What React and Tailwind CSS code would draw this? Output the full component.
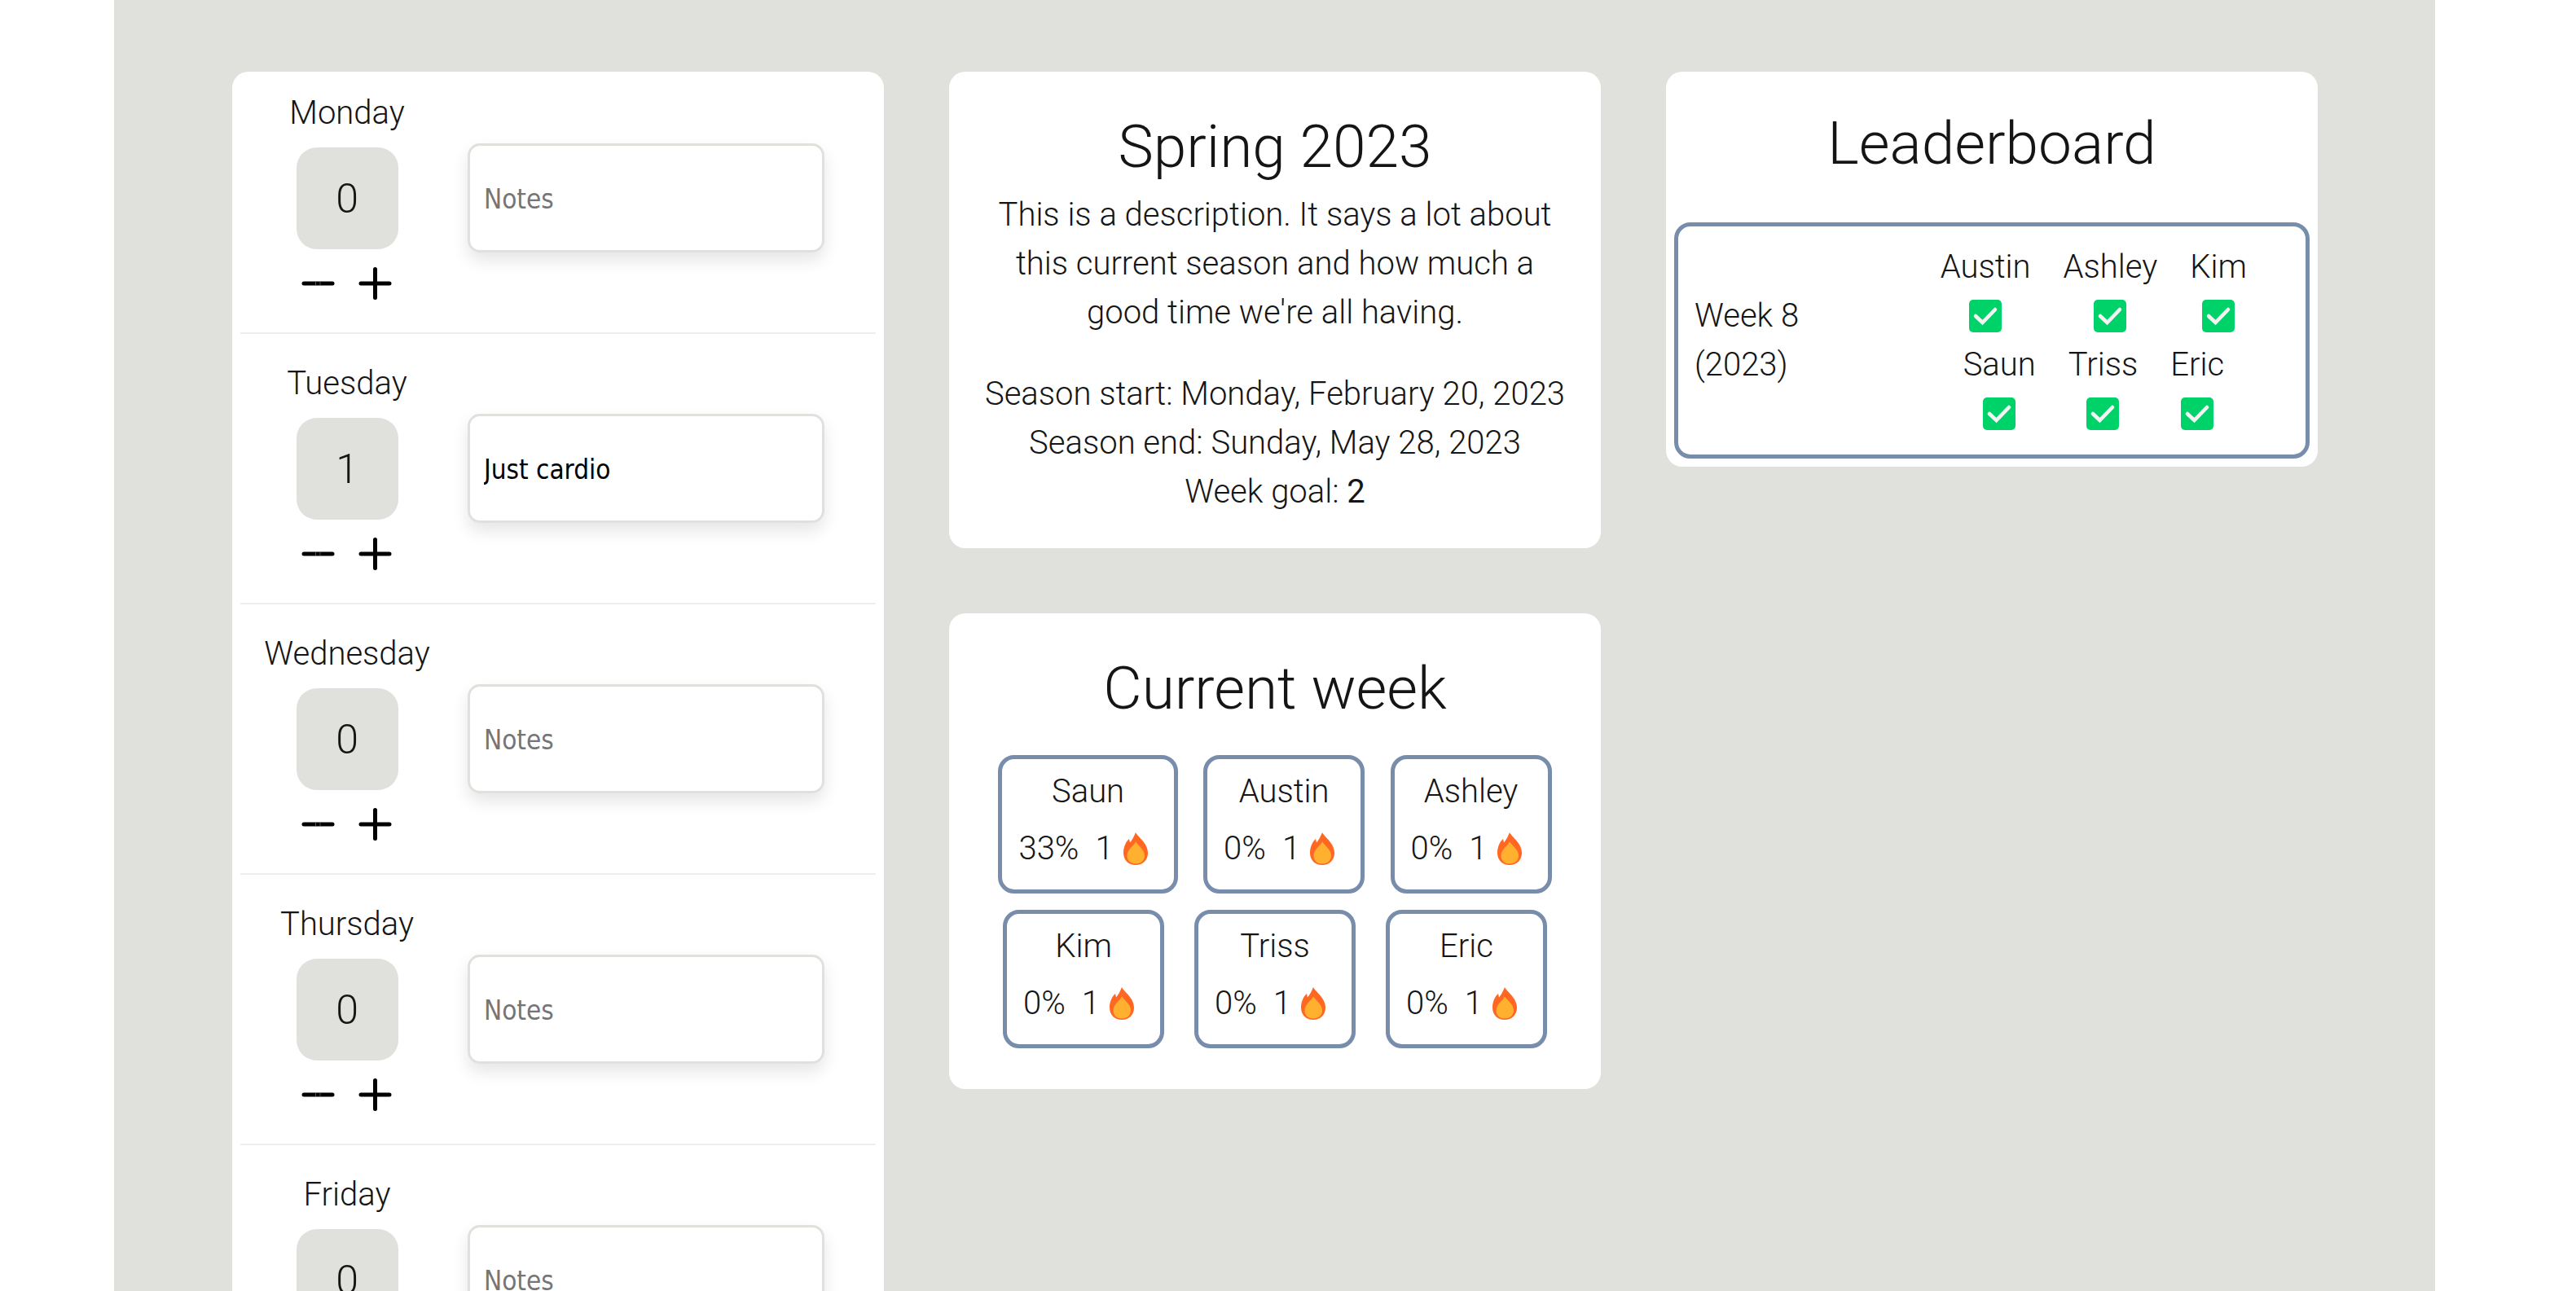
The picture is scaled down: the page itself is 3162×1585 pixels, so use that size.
import React, { useState } from "react";

const days = [
  { name: "Monday", count: 0, note: "" },
  { name: "Tuesday", count: 1, note: "Just cardio" },
  { name: "Wednesday", count: 0, note: "" },
  { name: "Thursday", count: 0, note: "" },
  { name: "Friday", count: 0, note: "" },
];

const weekRows = [
  [
    { name: "Saun", percent: 33, streak: 1 },
    { name: "Austin", percent: 0, streak: 1 },
    { name: "Ashley", percent: 0, streak: 1 },
  ],
  [
    { name: "Kim", percent: 0, streak: 1 },
    { name: "Triss", percent: 0, streak: 1 },
    { name: "Eric", percent: 0, streak: 1 },
  ],
];

const finishers = [
  ["Austin", "Ashley", "Kim"],
  ["Saun", "Triss", "Eric"],
];

function Minus() {
  return (
    <svg className="size-12" viewBox="0 0 48 48" aria-hidden="true">
      <path d="M6 24h35" stroke="#000" strokeWidth="5" strokeLinecap="round" />
      <path d="M20.5 21v6M26 21v6" stroke="#888" strokeWidth="0.6" />
    </svg>
  );
}

function Plus() {
  return (
    <svg className="size-12" viewBox="0 0 48 48" aria-hidden="true">
      <path d="M6 24h35M23.5 6.5v35" stroke="#000" strokeWidth="5" strokeLinecap="round" />
    </svg>
  );
}

function Flame() {
  return (
    <svg className="h-10 w-[30px]" viewBox="0 0 30 40" role="img" aria-label="streak">
      <path
        d="M15 0C18 6 30 13 30 25C30 34 23.5 40 15 40C6.5 40 0 34 0 25C0 17 3.5 11 7 8L8 12.5C11 9 13 5 15 0Z"
        fill="#ff6723"
      />
      <path
        d="M15 11.5C18 16 26 21 26 28.5C26 35 21 38.5 15 38.5C9 38.5 4.5 35 4.5 28.5C4.5 21 12 17 15 11.5Z"
        fill="#ffb02e"
      />
    </svg>
  );
}

function Check() {
  return (
    <svg className="size-10" viewBox="0 0 40 40" role="img" aria-label="done">
      <rect width="40" height="40" rx="5" fill="#00d26a" />
      <path
        d="M8 20l8.5 8L32 12"
        fill="none"
        stroke="#f4f4f4"
        strokeWidth="4.5"
        strokeLinecap="round"
        strokeLinejoin="miter"
      />
    </svg>
  );
}

function Day({ day }) {
  const [count, setCount] = useState(day.count);
  const [note, setNote] = useState(day.note);
  return (
    <li className="flex items-start border-b-2 border-[#eeeeee] pt-[30px] pb-9 first:pt-5">
      <div className="flex w-[262px] flex-col items-center">
        <h3 className="leading-[62px]">{day.name}</h3>
        <output className="mt-[11px] flex size-[125px] items-center justify-center rounded-[25px] bg-[#e0e1dc] text-[50px]">
          {count}
        </output>
        <div className="mt-[18px] flex gap-[22px]">
          <button aria-label={`Remove from ${day.name}`} onClick={() => setCount(Math.max(0, count - 1))}>
            <Minus />
          </button>
          <button aria-label={`Add to ${day.name}`} onClick={() => setCount(count + 1)}>
            <Plus />
          </button>
        </div>
      </div>
      <input
        type="text"
        aria-label={`${day.name} notes`}
        placeholder="Notes"
        value={note}
        onChange={(e) => setNote(e.target.value)}
        className="mt-[68px] mr-[63px] ml-[17px] h-[134px] min-w-0 flex-1 rounded-[15px] border-[3px] border-[#e0e1dc] bg-white px-[17px] pt-[2px] font-['DejaVu_Sans_Condensed','Noto_Sans',sans-serif] text-[33px] font-normal text-black shadow-[0_10px_20px_rgba(0,0,0,0.1)] placeholder:text-[#757575]"
      />
    </li>
  );
}

export default function App() {
  return (
    <div className="h-screen overflow-hidden bg-white pr-[173px] pl-[140px] font-[Roboto,sans-serif] text-[40px] leading-[60px] font-light text-[#151515]">
      <main className="grid min-h-screen grid-cols-3 items-start gap-20 bg-[#e0e1dc] pt-[88px] pr-36 pl-[145px]">
        <ul className="rounded-[20px] bg-white px-[10px]">
          {days.map((d) => (
            <Day key={d.name} day={d} />
          ))}
        </ul>

        <div className="flex flex-col gap-20">
          <section className="rounded-[20px] bg-white px-10 pt-[50px] pb-[39px] text-center">
            <h2 className="text-[73px] leading-[84px]">Spring 2023</h2>
            <p className="mt-3 px-2">
              This is a description. It says a lot about this current season and how much a good time we're all having.
            </p>
            <div className="mt-10">
              <p>Season start: Monday, February 20, 2023</p>
              <p>Season end: Sunday, May 28, 2023</p>
              <p>
                Week goal: <span className="font-normal">2</span>
              </p>
            </div>
          </section>

          <section className="rounded-[20px] bg-white px-[29px] pt-[50px] pb-[50px] text-center">
            <h2 className="text-[73px] leading-[84px]">Current week</h2>
            <div className="mt-10 flex flex-col gap-5">
              {weekRows.map((row, i) => (
                <div key={i} className="flex justify-evenly">
                  {row.map((m) => (
                    <article key={m.name} className="h-[170px] rounded-[20px] border-[5px] border-[#778dab] px-5 pt-[10px]">
                      <h3>{m.name}</h3>
                      <div className="mt-[10px] flex pr-3">
                        <span>{m.percent}%</span>
                        <span className="ml-5 flex items-center gap-3">
                          {m.streak}
                          <Flame />
                        </span>
                      </div>
                    </article>
                  ))}
                </div>
              ))}
            </div>
          </section>
        </div>

        <section className="rounded-[20px] bg-white px-[10px] pt-[46px] pb-[10px]">
          <h2 className="text-center text-[73px] leading-[84px]">Leaderboard</h2>
          <div className="mt-[55px] flex items-center justify-between rounded-[20px] border-[5px] border-[#778dab] py-5 pr-[72px] pl-5">
            <p className="w-[150px]">Week 8 (2023)</p>
            <div>
              {finishers.map((row, i) => (
                <div key={i} className="flex justify-center gap-10">
                  {row.map((n) => (
                    <div key={n} className="flex flex-col items-center">
                      <span>{n}</span>
                      <span className="flex h-[60px] items-center">
                        <Check />
                      </span>
                    </div>
                  ))}
                </div>
              ))}
            </div>
          </div>
        </section>
      </main>
    </div>
  );
}
